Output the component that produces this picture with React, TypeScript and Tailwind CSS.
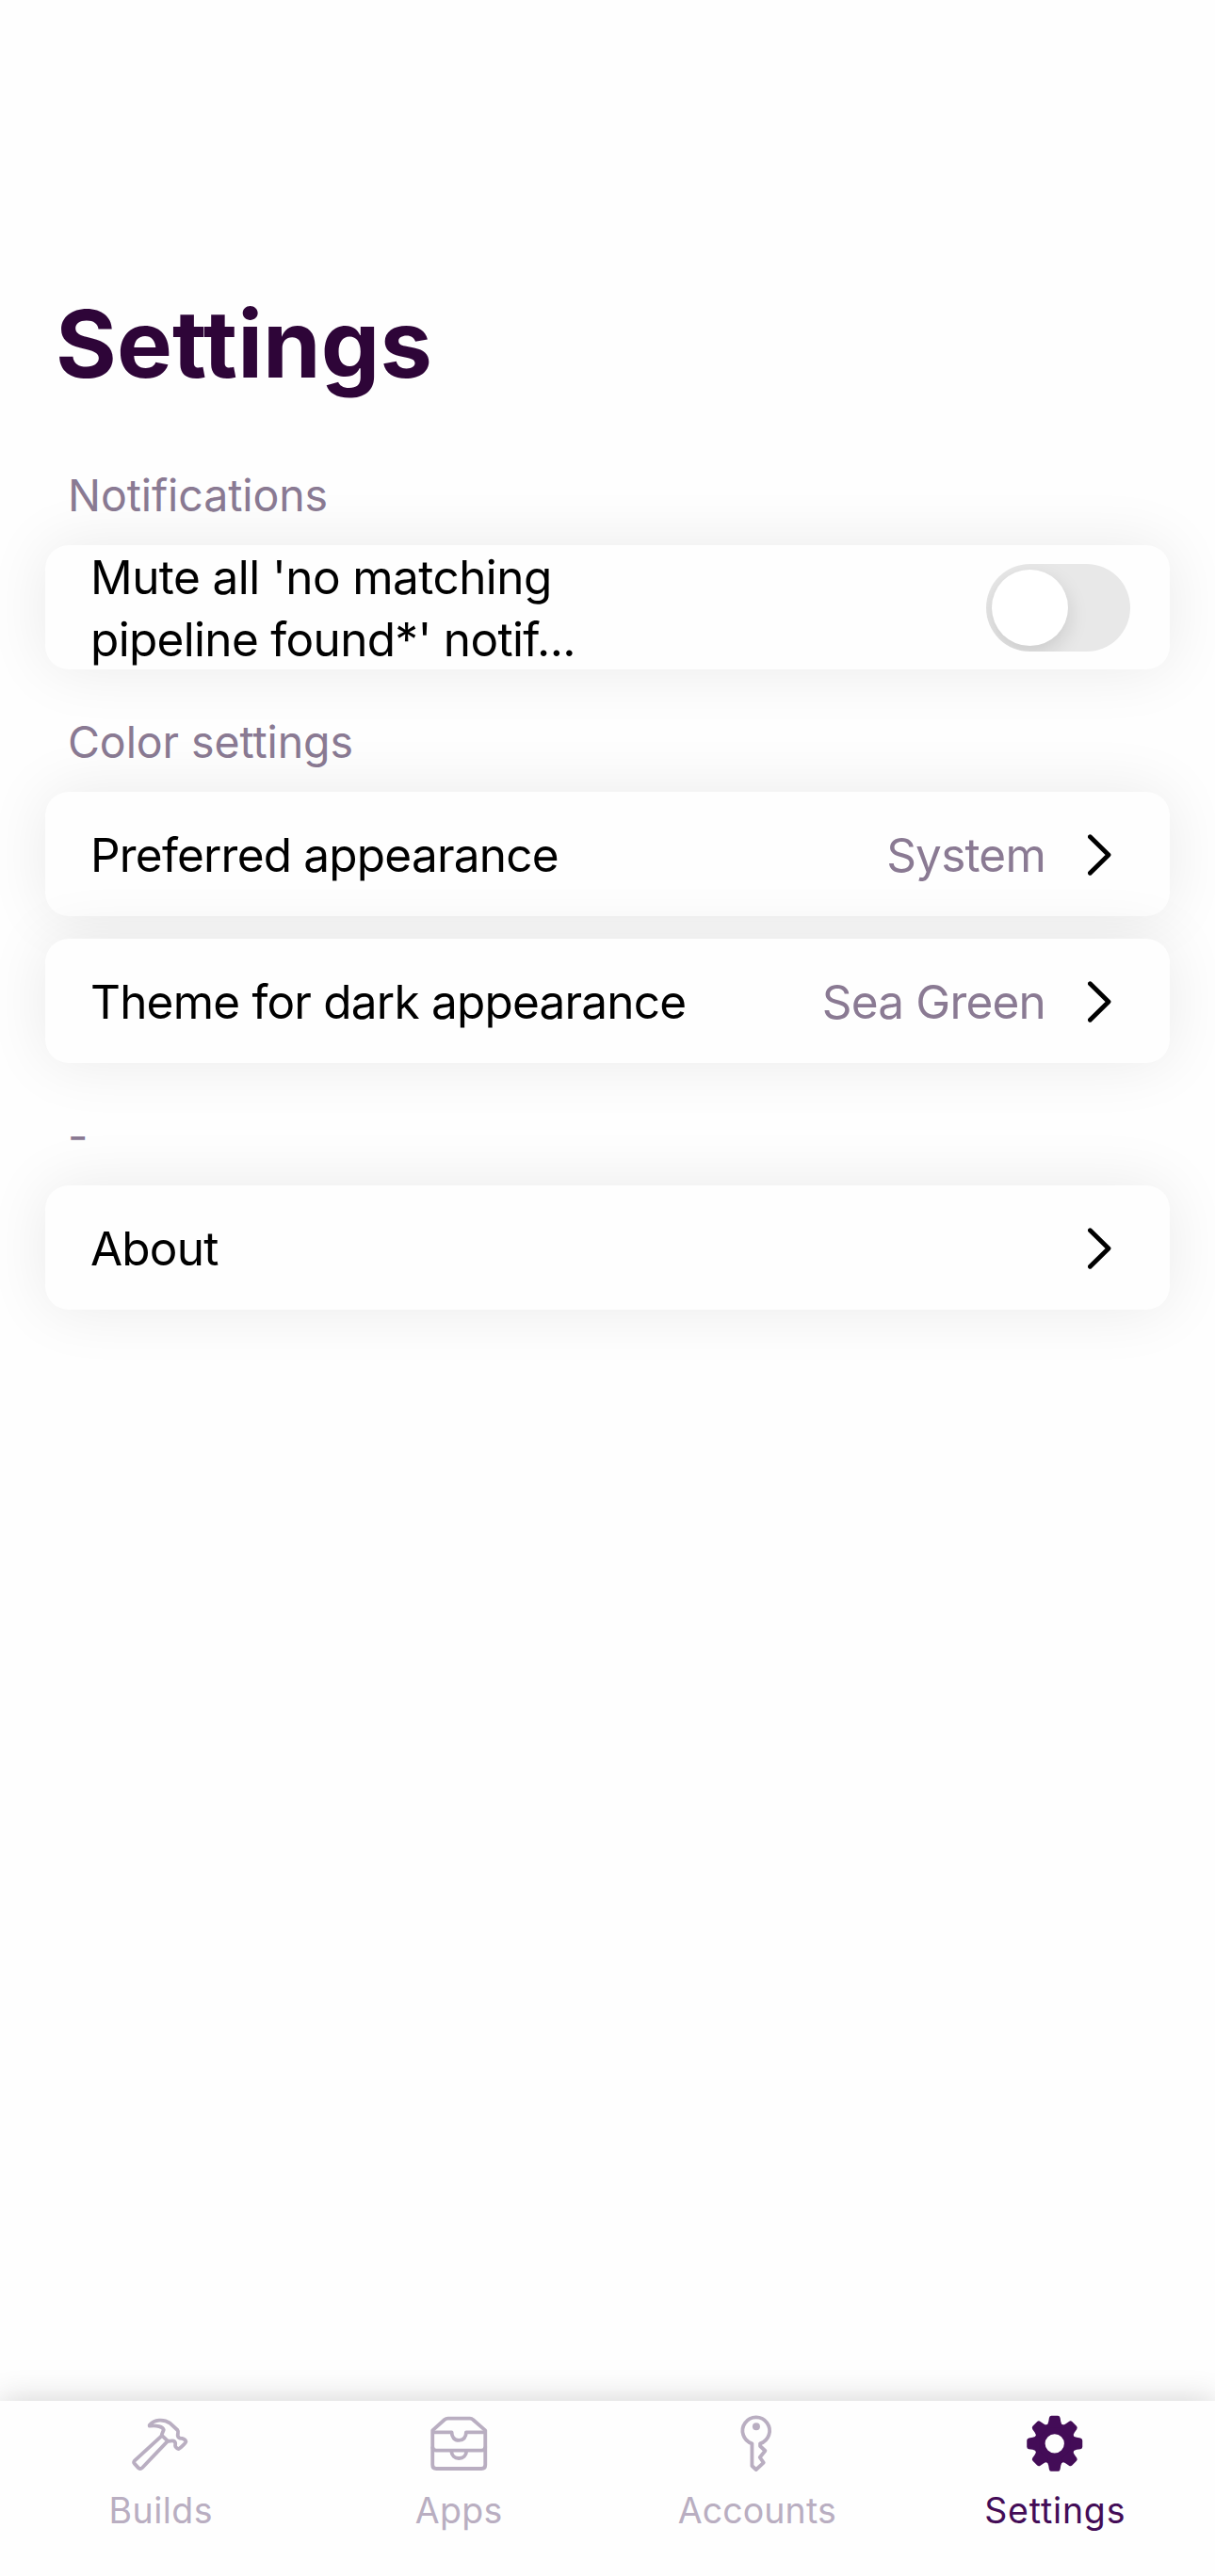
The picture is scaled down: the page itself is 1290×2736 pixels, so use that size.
import type { ReactNode } from "react";

function Chevron() {
  return (
    <svg className="mt-px ml-[45px] h-11 w-[25px] shrink-0" viewBox="0 0 25 44" fill="none" stroke="#000" strokeWidth="4.8" strokeLinecap="round" strokeLinejoin="round">
      <path d="M2.4 2.7 22 22 2.4 41.3" />
    </svg>
  );
}

function HammerIcon() {
  return (
    <svg className="size-16" viewBox="144.75 102 192 192" fill="none" stroke="currentColor" strokeWidth="11.5" strokeLinejoin="round" strokeLinecap="round">
      <path d="M207 137C222 119 252 117 272 131L296 153C301 159 296 166 297 171C298 177 303 180 311 179.500C317 181 323 186 323 190C323 194 305 211 300 213C296 213 289 207 289 203C290 197 290 190 284 188C278 186 272 189 265 188L246 170C246 163 251 158 252 152C250 142 230 137 207 140Z" />
      <path d="M245 172 160 250Q155 255 159 260L172 274Q178 279 184 273L263 190" />
    </svg>
  );
}

function DrawersIcon() {
  return (
    <svg className="size-16" viewBox="104.25 102 192 192" fill="none" stroke="currentColor" strokeWidth="11.5" strokeLinejoin="round">
      <path d="M117 154 155 120Q160 116 166 116H236Q242 116 246 120L285 154V264Q285 276 273 276H129Q117 276 117 264Z" />
      <path d="M117 160H178C178 176 187 185.500 201 185.500S224 176 224 160H285" />
      <path d="M117 206Q117 218 129 218H273Q285 218 285 206" />
      <path d="M177 220C178 234 187 243 201 243S224 234 225 220" />
    </svg>
  );
}

function KeyIcon() {
  return (
    <svg className="size-16" viewBox="213.75 102 192 192" fill="none" stroke="currentColor" strokeWidth="11.5" strokeLinejoin="round">
      <path d="M296 196A43 43 0 1 1 322 196V204L338 219 321 240 333 257 309 279 296 267Z" />
      <circle cx="309.500" cy="142" r="12" fill="currentColor" stroke="none" />
    </svg>
  );
}

const toothAngles = [0, 45, 90, 135, 180, 225, 270, 315];

function GearIcon() {
  return (
    <svg className="size-16" viewBox="-95.250 -94 192 192" fill="currentColor">
      <circle r="47.500" fill="none" stroke="currentColor" strokeWidth="34" />
      {toothAngles.map((angle) => (
        <path
          key={angle}
          transform={`rotate(${angle})`}
          d="M-27 -58Q-21 -61 -19.500 -70L-17.500 -82Q-16 -88.500 -10 -88.500H10Q16 -88.500 17.500 -82L19.500 -70Q21 -61 27 -58L20 -50H-20Z"
        />
      ))}
    </svg>
  );
}

function Section({ title, children }: { title: string; children: ReactNode }) {
  return (
    <section className="pt-[47px]">
      <h2 className="mb-[23px] pl-[72px] text-[46.5px] leading-[60px] tracking-[-0.1px] text-[#8a7a93]">{title}</h2>
      <div className="flex flex-col gap-6 px-12">{children}</div>
    </section>
  );
}

function Card({ children }: { children: ReactNode }) {
  return (
    <div className="flex h-[132px] items-center rounded-[25px] bg-[#fefefe] pl-12 text-[49.5px] leading-[66px] tracking-[-0.8px] text-black shadow-[0_0_66px_rgba(0,0,0,0.084)]">
      {children}
    </div>
  );
}

function LinkCard({ label, value }: { label: string; value?: string }) {
  return (
    <Card>
      <span className="flex-1 pt-0.5">{label}</span>
      {value && <span className="pt-0.5 text-[#8a7a93]">{value}</span>}
      <Chevron />
      <span className="w-[62px]" />
    </Card>
  );
}

function Toggle() {
  return (
    <button type="button" role="switch" aria-checked="false" className="mr-[42px] flex h-[93px] w-[153px] items-center overflow-hidden rounded-full bg-[#e8e8e8] pl-1.5">
      <span className="size-[81px] rounded-full bg-white shadow-[0_8px_22px_rgba(0,0,0,0.13)]" />
    </button>
  );
}

function Tab({ label, icon, className }: { label: string; icon: ReactNode; className: string }) {
  return (
    <a className={`flex flex-col items-center pt-[14px] text-[37.5px] leading-[48px] ${className}`}>
      {icon}
      <span className="mt-[15px] pl-px">{label}</span>
    </a>
  );
}

export default function App() {
  return (
    <div className="flex h-[2736px] w-[1290px] flex-col overflow-hidden bg-[#fefefe] font-[Inter,sans-serif]">
      <main className="flex-1 pt-[305px]">
        <h1 className="mb-6 pl-[59px] text-[99px] leading-[120px] font-bold tracking-[0.09px] text-[#2e0538]">Settings</h1>
        <Section title="Notifications">
          <Card>
            <p className="flex-1 pt-0.5">
              <span className="block tracking-[-0.58px]">Mute all 'no matching</span>
              <span className="block tracking-[-0.68px]">pipeline found*' notif...</span>
            </p>
            <Toggle />
          </Card>
        </Section>
        <Section title="Color settings">
          <LinkCard label="Preferred appearance" value="System" />
          <LinkCard label="Theme for dark appearance" value="Sea Green" />
        </Section>
        <Section title="-">
          <LinkCard label="About" />
        </Section>
      </main>
      <nav className="grid h-[186px] grid-cols-4 bg-[#fefefe] px-3 shadow-[0_0_32px_rgba(0,0,0,0.18)]">
        <Tab label="Builds" icon={<HammerIcon />} className="tracking-[0.5px] text-[#b9aec1]" />
        <Tab label="Apps" icon={<DrawersIcon />} className="tracking-[0.3px] text-[#b9aec1]" />
        <Tab label="Accounts" icon={<KeyIcon />} className="tracking-[0.12px] text-[#b9aec1]" />
        <Tab label="Settings" icon={<GearIcon />} className="tracking-[0.8px] text-[#430c57]" />
      </nav>
    </div>
  );
}
